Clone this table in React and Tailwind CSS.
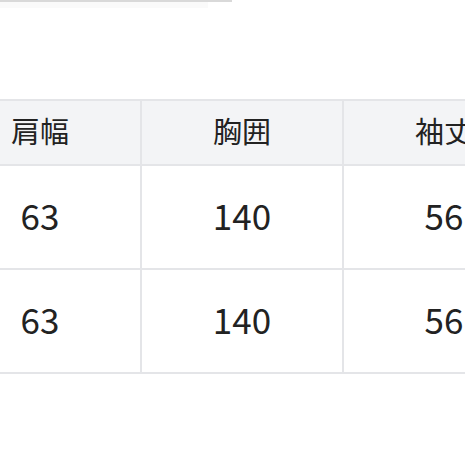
import React from 'react';

const rows = [
  ['63', '140', '56'],
  ['63', '140', '56'],
];

const App = () => {
  return (
    <div className="w-[465px] h-[465px] overflow-hidden bg-white relative" style={{ fontFamily: '"Noto Sans CJK JP", "Noto Sans", sans-serif' }}>
      {/* leftover strip from the previous block */}
      <div className="w-[232px] h-[2px] bg-[#d9d9d9]" />
      <div className="w-[208px] h-[6px] bg-[#fafafa]" />

      <div className="mt-[91px] -ml-[62px] w-[610px]">
        <table className="table-fixed w-[606px] border-collapse text-[#222] text-[29px]">
          <thead>
            <tr className="bg-[#f3f4f6]">
              {['肩幅', '胸囲', '袖丈'].map((h) => (
                <th key={h} className="w-[202px] h-[65px] pb-[4px] border-2 border-[#e4e5e8] font-normal text-center leading-none">
                  {h}
                </th>
              ))}
            </tr>
          </thead>
          <tbody>
            {rows.map((r, i) => (
              <tr key={i}>
                {r.map((v, j) => (
                  <td key={j} className="w-[202px] h-[104px] pb-[6px] border-2 border-[#e4e5e8] text-center text-[35px] leading-none">
                    {v}
                  </td>
                ))}
              </tr>
            ))}
          </tbody>
        </table>
      </div>
    </div>
  );
};

export default App;
